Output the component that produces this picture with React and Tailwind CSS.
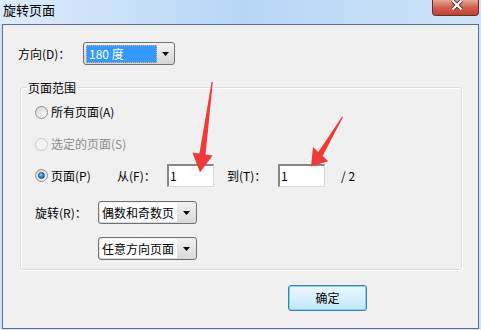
import React from "react";

const FONT = "font-['Noto_Sans_CJK_SC','Liberation_Sans',sans-serif]";

function Caret() {
  return (
    <svg width="7" height="4" viewBox="0 0 7 4">
      <path d="M0 0h7L3.5 4z" fill="#000" />
    </svg>
  );
}

function Radio({ checked, disabled }) {
  return (
    <span
      className={
        "w-[13px] h-[13px] rounded-full border flex items-center justify-center shrink-0 " +
        (disabled
          ? "border-[#c9c9c9] bg-[#f4f4f4]"
          : "border-[#8c8c8c] bg-gradient-to-br from-[#d4d4d4] to-[#fbfbfb]")
      }
    >
      {checked && (
        <span className="w-[7px] h-[7px] rounded-full bg-[radial-gradient(circle_at_40%_35%,#8fd3f8,#1a66b0_70%)] border border-[#1b4f86]" />
      )}
    </span>
  );
}

function Select({ width, text }) {
  return (
    <div
      className="h-[23px] border border-[#707070] rounded-[3px] bg-gradient-to-b from-[#f3f3f3] to-[#d9d9d9] flex items-stretch p-[1px]"
      style={{ width }}
    >
      <div className="flex-1 bg-white flex items-center pl-[2px] leading-[16px]">{text}</div>
      <div className="w-[18px] flex items-center justify-center">
        <Caret />
      </div>
    </div>
  );
}

function NumBox() {
  return (
    <div className="w-[47px] h-[23px] bg-white border-t-2 border-l-2 border-r border-b border-t-[#878787] border-l-[#878787] border-r-[#d8d8d8] border-b-[#d8d8d8] flex items-center pl-[1px] leading-[16px]">
      1
    </div>
  );
}

export default function App() {
  return (
    <div className={"w-[481px] h-[330px] relative overflow-hidden bg-[#cfe3f7] text-[12px] text-black " + FONT}>
      {/* title bar */}
      <div className="h-[24px] flex items-start justify-between bg-gradient-to-r from-[#dcebfb] via-[#b7d6f6] to-[#cde3f8]">
        <span className="pl-[3px] text-[13px] leading-[20px]">旋转页面</span>
        <div className="mr-[2px] w-[47px] h-[16px] rounded-b-[4px] border border-t-0 border-[#6e2a22] bg-gradient-to-b from-[#e9a598] via-[#d0604e] to-[#c2412d] flex justify-center">
          <svg width="12" height="10" viewBox="0 0 12 10" className="ml-[3px]">
            <path d="M1.5 0.5l9 9M10.5 0.5l-9 9" stroke="#5b2b26" strokeWidth="4" />
            <path d="M1.5 0.5l9 9M10.5 0.5l-9 9" stroke="#fff" strokeWidth="2.2" />
          </svg>
        </div>
      </div>

      {/* client area */}
      <div className="ml-[2px] w-[477px] h-[305px] border border-[#5d6f85] bg-[#f0f0f0] flex flex-col">
        <div className="mt-[17px] h-[23px] pl-[15px] flex items-center">
          <span className="w-[65px] leading-[16px]">方向(D)：</span>
          <div className="w-[92px] h-[23px] border border-[#707070] rounded-[3px] bg-gradient-to-b from-[#f3f3f3] to-[#d6d6d6] flex items-center pl-[2px]">
            <div className="w-[71px] h-[18px] bg-[#3399ff] border border-dotted border-[#f0b060] text-white flex items-center pl-[2px] leading-[16px]">
              180 度
            </div>
            <div className="flex-1 flex items-center justify-center">
              <Caret />
            </div>
          </div>
        </div>

        {/* group box */}
        <div className="mt-[22px] ml-[17px] w-[442px] border border-[#d5dfe5] rounded-[3px] shadow-[1px_1px_0_#fff,inset_1px_1px_0_#fff] flex flex-col pb-[9px]">
          <span className="-mt-[8px] ml-[6px] px-[1px] self-start bg-[#f0f0f0] leading-[16px]">页面范围</span>

          <div className="mt-[6px] h-[20px] pl-[14px] flex items-center gap-[3px]">
            <Radio />
            <span className="leading-[16px]">所有页面(A)</span>
          </div>

          <div className="mt-[12px] h-[20px] pl-[14px] flex items-center gap-[3px]">
            <Radio disabled />
            <span className="leading-[16px] text-[#8d8d8d]">选定的页面(S)</span>
          </div>

          <div className="mt-[10px] h-[23px] pl-[14px] flex items-center">
            <div className="w-[82px] flex items-center gap-[3px]">
              <Radio checked />
              <span className="leading-[16px]">页面(P)</span>
            </div>
            <span className="w-[50px] leading-[16px]">从(F)：</span>
            <NumBox />
            <span className="ml-[13px] w-[51px] leading-[16px]">到(T)：</span>
            <NumBox />
            <span className="ml-[16px] leading-[16px]">/ 2</span>
          </div>

          <div className="mt-[14px] h-[23px] pl-[14px] flex items-center">
            <span className="w-[63px] leading-[16px]">旋转(R)：</span>
            <Select width={99} text="偶数和奇数页" />
          </div>

          <div className="mt-[13px] h-[23px] pl-[77px] flex items-center">
            <Select width={99} text="任意方向页面" />
          </div>
        </div>

        <button className="mt-[15px] ml-[285px] w-[79px] h-[26px] rounded-[3px] border border-[#3c7fb1] bg-gradient-to-b from-[#eaf6fd] via-[#d9f0fc] to-[#bee6fd] shadow-[inset_0_0_0_1px_#7fd4f7] leading-[16px]">
          确定
        </button>
      </div>

      {/* red annotation arrows */}
      <svg className="absolute inset-0 pointer-events-none" width="481" height="330">
        <polygon
          points="212.8,82 205.6,154.4 212.6,155.4 200,172.5 192.4,152.6 199.4,153.6 211.6,82"
          fill="#f03a3a"
        />
        <polygon
          points="342.9,117.3 322.7,156 328.3,161.3 311,166.5 313,147 318.3,152 342.1,116.5"
          fill="#f03a3a"
        />
      </svg>
    </div>
  );
}
